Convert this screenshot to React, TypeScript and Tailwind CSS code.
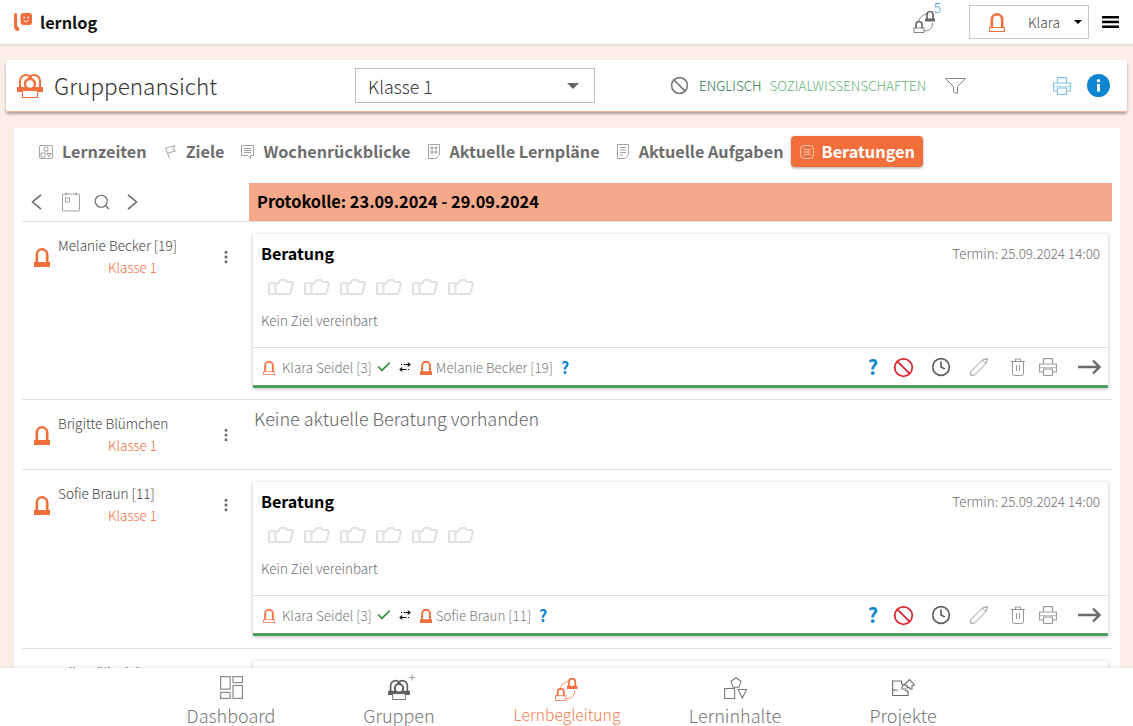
import type { ReactNode } from 'react';
import { Ban, Check, Clock, EllipsisVertical, Search } from 'lucide-react';

const font = "font-['Noto_Sans_CJK_SC',sans-serif]";

function Person({ className = '', solid = false }: { className?: string; solid?: boolean }) {
    return (
        <svg viewBox="0 0 16 20" className={className} fill="none" stroke="currentColor">
            <path d="M2.8 15.5V7.5a5.2 5.2 0 0 1 10.4 0v8" strokeWidth="2.6" />
            {solid ? (
                <rect x="0" y="15" width="16" height="5" fill="currentColor" stroke="none" />
            ) : (
                <rect x="0.5" y="15.5" width="15" height="4" strokeWidth="1" />
            )}
        </svg>
    );
}

function GroupIcon({ className = '' }: { className?: string }) {
    return (
        <svg viewBox="0 0 26 25" className={className} fill="none" stroke="currentColor" strokeWidth="2">
            <path d="M3 15V8a6 6 0 0 1 12 0" />
            <path d="M23 15V8a6 6 0 0 0-12 0" />
            <rect x="0" y="14" width="26" height="5" fill="currentColor" stroke="none" />
            <circle cx="13" cy="11" r="5" fill="#fff" strokeWidth="2.4" />
            <rect x="5.500" y="17.500" width="15" height="7" strokeWidth="1" fill="#fff" />
        </svg>
    );
}

function ConnectIcon({ className = '' }: { className?: string }) {
    return (
        <svg viewBox="0 0 24 22" className={className} fill="none" stroke="currentColor">
            <path d="M5 11c.5-4 4-7 8-8M11 20c5 0 8-3 8-8" strokeWidth="0.8" />
            <path d="M13.500 8V3.500a3 3 0 0 1 6 0V8" strokeWidth="1.700" />
            <rect x="11.500" y="7.500" width="10" height="3" fill="currentColor" stroke="none" />
            <path d="M2.500 17v-3.500a3 3 0 0 1 6 0V17" strokeWidth="1.700" />
            <rect x="0.500" y="17" width="10" height="4.500" strokeWidth="0.8" />
        </svg>
    );
}

function Thumb() {
    return (
        <svg viewBox="0 0 26 18" className="w-[26px] h-[18px] text-[#e0e0e0]" fill="none" stroke="currentColor" strokeWidth="2">
            <rect x="1" y="5" width="6.500" height="11" rx="1.500" />
            <path d="M8 7l5-5h4l2.500 2H23c1.200 0 2 1 1.700 2.300l-2 8.200c-.3 1-1 1.500-2 1.500H8" />
        </svg>
    );
}

function PrinterIcon({ className = '' }: { className?: string }) {
    return (
        <svg viewBox="0 0 18 18" className={className} fill="none" stroke="currentColor" strokeWidth="1.100">
            <path d="M4.500 6V.6h9V6" />
            <path d="M4.500 14H.6V6h16.800v8h-3.900" />
            <path d="M.6 9.500h16.800" strokeWidth="0.6" />
            <rect x="4.500" y="11" width="9" height="6.400" />
        </svg>
    );
}

function PencilIcon() {
    return (
        <svg viewBox="0 0 18 18" className="w-[18px] h-[18px] text-[#8a8a8a]" fill="none" stroke="currentColor" strokeWidth="0.9">
            <path d="M.7 13.800L12.500 2 16 5.500 4.200 17.300H.7z" />
            <path d="M12.500 2l5-1.500-1.500 5" />
        </svg>
    );
}

function TrashIcon() {
    return (
        <svg viewBox="0 0 14 18" className="w-[14px] h-[18px] text-[#8a8a8a]" fill="none" stroke="currentColor" strokeWidth="0.9">
            <path d="M0 3.500h14M4.500 3.500V1h5v2.500" />
            <path d="M1.500 3.500v12a2 2 0 0 0 2 2h7a2 2 0 0 0 2-2v-12" />
            <path d="M5.500 7v6M8.500 7v6" />
        </svg>
    );
}

function LongArrow() {
    return (
        <svg viewBox="0 0 23 16" className="w-[23px] h-4 text-[#6a6a6a]" fill="none" stroke="currentColor" strokeWidth="2.400">
            <path d="M0 8h21.500M15 1.500L21.500 8 15 14.500" />
        </svg>
    );
}

function SwapIcon() {
    return (
        <svg viewBox="0 0 14 12" className="w-[14px] h-3 text-black" fill="none" stroke="currentColor" strokeWidth="1.200">
            <path d="M3 3.500h1M5.500 3.500h6" />
            <path d="M9.800 1l3 2.500-3 2.500z" fill="currentColor" stroke="none" />
            <path d="M2.500 8.500h6M10 8.500h1" />
            <path d="M4.200 6l-3 2.500 3 2.500z" fill="currentColor" stroke="none" />
        </svg>
    );
}

function Chevron({ left = false }: { left?: boolean }) {
    return (
        <svg viewBox="0 0 11 16" className="w-[11px] h-4 text-[#6a6a6a]" fill="none" stroke="currentColor" strokeWidth="1.600">
            <path d={left ? 'M10 .8L1.500 8l8.500 7.200' : 'M1 .8L9.500 8 1 15.200'} />
        </svg>
    );
}

function CalendarIcon() {
    return (
        <svg viewBox="0 0 18 20" className="w-[18px] h-5 text-[#8a8a8a]" fill="none" stroke="currentColor" strokeWidth="0.8">
            <rect x="0.500" y="2" width="17" height="17" rx="1" />
            <path d="M4 0.500v3M14 0.500v3" />
            <rect x="3.500" y="6" width="4" height="4" />
        </svg>
    );
}

function DocIcon({ dots = false }: { dots?: boolean }) {
    return (
        <svg viewBox="0 0 12 15" className="w-3 h-[15px] text-[#8a8a8a]" fill="none" stroke="currentColor" strokeWidth="0.8">
            <path d="M.5.500h11v10l-3.500 4H.5z" />
            {dots ? <path d="M3 3h2v2H3zM7 3h2v2H7zM3 7h2v2H3zM7 7h2v2H7z" /> : <path d="M3 3.500h6M3 6h6M3 8.500h6M3 11h3" />}
        </svg>
    );
}

function TabIcon({ id }: { id: string }) {
    if (id === 'Lernzeiten') {
        return (
            <svg viewBox="0 0 14 14" className="w-[14px] h-[14px] text-[#8a8a8a]" fill="none" stroke="currentColor" strokeWidth="0.8">
                <rect x="0.500" y="0.500" width="13" height="13" rx="1.500" />
                <path d="M5 6V4a2 2 0 0 1 4 0v2z M2 8h4v4H2z M8 8.500h4l-2 3.500z" />
            </svg>
        );
    }
    if (id === 'Ziele') {
        return (
            <svg viewBox="0 0 11 14" className="w-[11px] h-[14px] text-[#8a8a8a]" fill="none" stroke="currentColor" strokeWidth="0.8">
                <path d="M4.500 13.500L.6 3 10 .8 7.800 4l2.700 2L3 8" />
            </svg>
        );
    }
    if (id === 'Wochenrückblicke') {
        return (
            <svg viewBox="0 0 13 14" className="w-[13px] h-[14px] text-[#8a8a8a]" fill="none" stroke="currentColor" strokeWidth="0.8">
                <path d="M.5.500h12v10H9.500v3L7 10.500H.5z M3 3.500h7M3 5.500h7M3 7.500h7" />
            </svg>
        );
    }
    if (id === 'Aktuelle Lernpläne') return <DocIcon dots />;
    return <DocIcon />;
}

const tabs = [
    { label: 'Lernzeiten', gap: 'mr-[18px]', icon: 'mr-[9px]' },
    { label: 'Ziele', gap: 'mr-[17px]', icon: 'mr-[10px]' },
    { label: 'Wochenrückblicke', gap: 'mr-[18px]', icon: 'mr-[9px]' },
    { label: 'Aktuelle Lernpläne', gap: 'mr-[17px]', icon: 'mr-[9px]' },
    { label: 'Aktuelle Aufgaben', gap: 'mr-[7px]', icon: 'mr-[10px]' },
];

function Consult({ name }: { name: string }) {
    return (
        <div className="mx-[4px] mt-[12px] h-[154px] flex flex-col shadow-[0_1px_4px_rgba(0,0,0,0.25)] border-b-[3px] border-[#4e9f5f] bg-white">
            <div className="flex-1 px-2 pt-[6px]">
                <div className="flex justify-between items-start">
                    <span className="text-[16.1px] leading-[26px] font-bold text-black">Beratung</span>
                    <span className="text-[13.4px] leading-[26px] font-light text-[#6e6e6e]">Termin: 25.09.2024 14:00</span>
                </div>
                <div className="flex gap-[10px] ml-[7px] mt-[12px]">
                    <Thumb /><Thumb /><Thumb /><Thumb /><Thumb /><Thumb />
                </div>
                <p className="text-[13.4px] leading-5 font-light text-[#6e6e6e] mt-[14px]">Kein Ziel vereinbart</p>
            </div>
            <div className="h-[38px] shrink-0 border-t border-[#e0e0e0] flex items-center pt-[1px] pl-[10px] pr-[7px]">
                <Person className="w-[12px] h-[15px] text-[#f47b4d] mr-[7px]" />
                <span className="text-[13.4px] font-light text-[#7a7a7a]">Klara Seidel [3]</span>
                <Check className="w-4 h-4 text-[#2e8b3e] ml-[4px]" strokeWidth={2.500} />
                <div className="ml-[6px]"><SwapIcon /></div>
                <Person className="w-[12px] h-[15px] text-[#f26f3c] ml-[8px] mr-[4px]" solid />
                <span className="text-[13.4px] font-light text-[#7a7a7a]">{name}</span>
                <span className="text-[16px] font-bold text-[#0b87d1] ml-[8px]">?</span>
                <div className="ml-auto flex items-center">
                    <span className="text-[20px] font-bold text-[#0b87d1] mr-[15px]">?</span>
                    <Ban className="w-[21px] h-[21px] text-[#d9262c] mr-[17px]" />
                    <Clock className="w-[20px] h-[20px] text-[#5f5f5f] mr-[19px]" />
                    <div className="mr-[23px]"><PencilIcon /></div>
                    <div className="mr-[14px]"><TrashIcon /></div>
                    <PrinterIcon className="w-[18px] h-[18px] text-[#999] mr-[21px]" />
                    <LongArrow />
                </div>
            </div>
        </div>
    );
}

function Student({ name }: { name: string }) {
    return (
        <div className="w-[227px] shrink-0 flex items-start pl-[12px]">
            <Person className="w-4 h-5 mt-[25px] text-[#f26f3c] shrink-0" solid />
            <div className="ml-[8px] w-[154px] pt-[12px]">
                <div className="text-[13.6px] leading-[22px] font-light text-[#444]">{name}</div>
                <div className="text-[13.5px] leading-[22px] font-light text-[#f26f3c] ml-[50px]">Klasse 1</div>
            </div>
            <EllipsisVertical className="w-4 h-4 mt-[27px] text-[#6a6a6a] ml-[6px]" strokeWidth={2.500} />
        </div>
    );
}

function DashIcon() {
    return (
        <svg viewBox="0 0 23 23" className="w-[23px] h-[23px] text-[#8a8a8a]" fill="none" stroke="currentColor" strokeWidth="1.200">
            <rect x="0.600" y="0.600" width="9.500" height="12.500" />
            <rect x="13" y="0.600" width="9.400" height="6" />
            <rect x="0.600" y="16.400" width="9.500" height="6" />
            <rect x="13" y="9.500" width="9.400" height="12.900" />
        </svg>
    );
}

function ShapesIcon() {
    return (
        <svg viewBox="0 0 23 22" className="w-[23px] h-[22px] text-[#7a7a7a]" fill="none" stroke="currentColor" strokeWidth="1.100">
            <path d="M12 .7l5 3.600-2 6H9l-2-6z" />
            <rect x="0.600" y="11.500" width="10" height="10" />
            <path d="M14 12.500h8.500l-4.200 8.500z" />
        </svg>
    );
}

function ProjectIcon() {
    return (
        <svg viewBox="0 0 23 18" className="w-[23px] h-[18px] text-[#6a6a6a]" fill="none" stroke="currentColor" strokeWidth="1.100">
            <path d="M.6 2h8.900v3l2 1-1.500 2v2h3l1 2h2v4.500H.6z" />
            <path d="M.6 11h5" />
            <path d="M12 6l5.500-5.500L22.500 6 20 6.500V10h-2l-1-2-2 1V6.500z" />
        </svg>
    );
}

function NavItem({ label, icon, active = false }: { label: string; icon: ReactNode; active?: boolean }) {
    return (
        <div className="w-[168px] flex flex-col items-center">
            <div className="h-[37px] pt-[8px] flex items-start">{icon}</div>
            <span className={`leading-[22px] font-light ${active ? 'text-[15.7px] text-[#f47b4d]' : 'text-[18px] text-[#777]'}`}>{label}</span>
        </div>
    );
}

export default function App() {
    return (
        <div className={`${font} w-[1133px] h-[726px] overflow-hidden flex flex-col bg-[#fcefea]`}>
            <header className="h-[46px] shrink-0 bg-white border-b-2 border-[#e0e0e0] flex items-center pl-[14px] pr-[14px]">
                <svg viewBox="0 0 18 18" className="w-[18px] h-[18px] text-[#f26f3c]">
                    <path d="M0 1.500C0 .5.700 0 1.500 0S3 .5 3 1.500V12c0 1 .8 2 2 2.500V17c0 .7-.6 1-1.200 1C1.500 18 0 15.500 0 13z" fill="currentColor" />
                    <rect x="6.500" y="0" width="11.500" height="12" rx="3" fill="currentColor" />
                    <circle cx="10.200" cy="4.500" r="0.900" fill="#fff" />
                    <circle cx="14.300" cy="4.500" r="0.900" fill="#fff" />
                    <path d="M9.700 7.500c1.500 1.300 3.500 1.300 5 0" stroke="#fff" fill="none" />
                </svg>
                <span className="ml-[8px] text-[16.3px] font-bold text-[#111]">lernlog</span>
                <div className="ml-auto relative mr-[31px] text-[#666]">
                    <ConnectIcon className="w-[25px] h-[22px]" />
                    <span className="absolute right-[-3px] top-[-11px] text-[13px] leading-[16px] font-light text-[#2b93d8]">5</span>
                </div>
                <div className="w-[120px] h-[34px] border border-[#c8c8c8] flex items-center pl-[19px] pr-[6px]">
                    <Person className="w-4 h-5 text-[#f26f3c]" />
                    <span className="ml-[23px] text-[13.8px] font-light text-[#444]">Klara</span>
                    <span className="ml-auto w-0 h-0 border-x-[4px] border-x-transparent border-t-[4px] border-t-black" />
                </div>
                <svg viewBox="0 0 17 12" className="ml-[13px] w-[17px] h-3 text-black" fill="currentColor">
                    <rect width="17" height="2.500" />
                    <rect y="4.700" width="17" height="2.500" />
                    <rect y="9.500" width="17" height="2.500" />
                </svg>
            </header>

            <div className="mx-[6px] mt-[14px] h-[52px] shrink-0 bg-white rounded-[2px] border-b border-[#f3b49a] shadow-[0_2px_3px_rgba(0,0,0,0.35)] flex items-center pl-[11px] pr-[17px]">
                <GroupIcon className="w-[26px] h-[25px] text-[#f26f3c]" />
                <span className="ml-[11px] text-[22.5px] font-light text-[#333]">Gruppenansicht</span>
                <div className="ml-[138px] w-[240px] h-[35px] border border-[#bdbdbd] flex items-center pl-3 pr-[15px]">
                    <span className="pt-[1px] text-[17.8px] font-light text-[#333]">Klasse 1</span>
                    <span className="ml-auto w-0 h-0 border-x-[6px] border-x-transparent border-t-[6px] border-t-[#666]" />
                </div>
                <Ban className="ml-[75px] w-[19px] h-[19px] text-[#777]" />
                <span className="ml-[10px] text-[13.4px] font-light text-[#2a7550]">ENGLISCH</span>
                <span className="ml-[8px] text-[13.45px] font-light text-[#5fb274]">SOZIALWISSENSCHAFTEN</span>
                <svg viewBox="0 0 21 16" className="ml-[19px] w-[21px] h-4 text-[#8a8a8a]" fill="none" stroke="currentColor">
                    <path d="M.5.500h20l-8 8v7l-4-1.500V8.500z" />
                </svg>
                <PrinterIcon className="ml-auto w-[18px] h-[18px] text-[#7cc1ec]" />
                <svg viewBox="0 0 23 23" className="ml-[16px] w-[23px] h-[23px]">
                    <circle cx="11.500" cy="11.500" r="11.500" fill="#0b87d1" />
                    <circle cx="11.500" cy="6.800" r="1.700" fill="#fff" />
                    <rect x="10" y="10" width="3" height="7.500" fill="#fff" />
                </svg>
            </div>

            <main className="ml-[14px] w-[1106px] mt-[16px] flex-1 min-h-0 overflow-hidden bg-white px-[8px]">
                <div className="h-[55px] flex items-start pt-[8px] pl-[17px]">
                    {tabs.map((t) => (
                        <div key={t.label} className={`flex items-center h-[31px] ${t.gap}`}>
                            <div className={t.icon}><TabIcon id={t.label} /></div>
                            <span className="pb-[1px] text-[16.2px] font-bold text-[#6e6e6e]">{t.label}</span>
                        </div>
                    ))}
                    <div className="flex items-center h-[31px] w-[132px] pl-[9px] rounded-[4px] bg-[#f26f3c] shadow-[0_1px_3px_rgba(0,0,0,0.35)]">
                        <svg viewBox="0 0 14 14" className="w-[14px] h-[14px] text-white/80" fill="none" stroke="currentColor" strokeWidth="0.8">
                            <rect x="0.500" y="0.500" width="13" height="13" rx="4" />
                            <path d="M3.500 4.500h7M3.500 7h7M3.500 9.500h7" />
                        </svg>
                        <span className="ml-[8px] pb-[1px] text-[16.3px] font-bold text-white">Beratungen</span>
                    </div>
                </div>

                <div className="flex h-[39px] border-b border-[#e0e0e0]">
                    <div className="w-[227px] shrink-0 flex items-center pl-[9px] text-[#6a6a6a]">
                        <Chevron left />
                        <div className="ml-[20px]"><CalendarIcon /></div>
                        <Search className="ml-[13px] w-[18px] h-[18px]" strokeWidth={1.5} />
                        <div className="ml-[16px]"><Chevron /></div>
                    </div>
                    <div className="flex-1 bg-[#f5a88a] flex items-center pl-[8px] pb-[2px] text-[16.35px] font-bold text-black">
                        Protokolle: 23.09.2024 - 29.09.2024
                    </div>
                </div>

                <div className="flex h-[178px] border-b border-[#e0e0e0]">
                    <Student name="Melanie Becker [19]" />
                    <div className="flex-1"><Consult name="Melanie Becker [19]" /></div>
                </div>
                <div className="flex h-[70px] border-b border-[#e0e0e0]">
                    <Student name="Brigitte Blümchen" />
                    <div className="flex-1 pl-[5px] pt-[5px] text-[18px] font-light text-[#666]">Keine aktuelle Beratung vorhanden</div>
                </div>
                <div className="flex h-[179px] border-b border-[#e0e0e0]">
                    <Student name="Sofie Braun [11]" />
                    <div className="flex-1"><Consult name="Sofie Braun [11]" /></div>
                </div>
                <div className="flex h-[178px]">
                    <Student name="Mila Gölke [8]" />
                    <div className="flex-1"><Consult name="Mila Gölke [8]" /></div>
                </div>
            </main>

            <nav className="relative h-[58px] shrink-0 bg-white flex pl-[147px] shadow-[0_-1px_3px_rgba(0,0,0,0.08)]">
                <NavItem label="Dashboard" icon={<DashIcon />} />
                <NavItem
                    label="Gruppen"
                    icon={
                        <div className="relative text-[#5f5f5f]">
                            <GroupIcon className="w-[22px] h-[21px] mt-[3px]" />
                            <span className="absolute right-[-5px] top-[-5px] text-[11px] leading-[12px] text-[#888]">+</span>
                        </div>
                    }
                />
                <NavItem label="Lernbegleitung" active icon={<ConnectIcon className="w-[25px] h-[23px] mt-[2px] text-[#f26f3c]" />} />
                <NavItem label="Lerninhalte" icon={<div className="mt-[1px]"><ShapesIcon /></div>} />
                <NavItem label="Projekte" icon={<div className="mt-[3px]"><ProjectIcon /></div>} />
            </nav>
        </div>
    );
}
